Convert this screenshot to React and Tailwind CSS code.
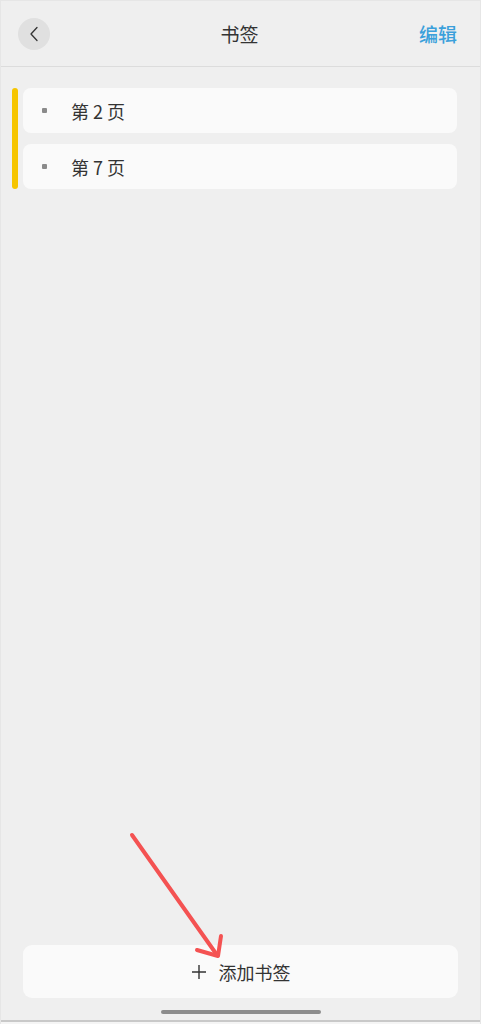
import React from "react";

export default function App() {
  const font = { fontFamily: '"Noto Sans CJK SC", "Noto Sans", sans-serif' };
  return (
    <div
      className="relative flex h-[1024px] w-[481px] flex-col bg-[#efefef] text-[#333333] border-l border-r border-t border-[#e6e6e6]"
      style={font}
    >
      {/* Header */}
      <div className="grid h-[66px] shrink-0 grid-cols-[1fr_auto_1fr] items-center border-b border-[#dcdcdc] pl-[17px] pr-[23px]">
        <div className="flex">
          <button className="flex h-[32px] w-[32px] items-center justify-center rounded-full bg-[#e0e0e0]">
            <svg width="10" height="16" viewBox="0 0 10 16" fill="none">
              <path d="M8 1.5L2 8l6 6.5" stroke="#333" strokeWidth="1.3" strokeLinecap="round" strokeLinejoin="round" />
            </svg>
          </button>
        </div>
        <div className="pl-[4px] text-[19px] font-normal leading-none text-[#333]">书签</div>
        <div className="flex justify-end">
          <div className="text-[19px] font-medium leading-none text-[#3ba0db]">编辑</div>
        </div>
      </div>

      {/* List */}
      <div className="flex gap-[5px] pl-[11px] pr-[23px] pt-[21px]">
        <div className="w-[6px] self-stretch rounded-full bg-[#f6c500]" />
        <div className="flex flex-1 flex-col gap-[11px]">
          {["第 2 页", "第 7 页"].map((t) => (
            <div key={t} className="flex h-[45px] items-center rounded-[8px] bg-[#fafafa] pl-[19px]">
              <div className="h-[5px] w-[5px] rounded-[1px] bg-[#8a8a8a]" />
              <div className="ml-[24px] text-[18px] leading-none text-[#333]">{t}</div>
            </div>
          ))}
        </div>
      </div>

      <div className="flex-1" />

      {/* Add button */}
      <div className="px-[22px]">
        <div className="flex h-[53px] items-center justify-center rounded-[9px] bg-[#fafafa]">
          <svg width="16" height="16" viewBox="0 0 16 16" fill="none" className="mr-[12px]">
            <path d="M8 1v14M1 8h14" stroke="#333" strokeWidth="1.4" />
          </svg>
          <span className="text-[18px] leading-none text-[#333]">添加书签</span>
        </div>
      </div>

      {/* Home indicator */}
      <div className="flex h-[22px] shrink-0 items-end justify-center pb-[6px]">
        <div className="h-[4px] w-[160px] rounded-full bg-[#8c8c8c]" />
      </div>
      <div className="h-[2px] shrink-0 bg-[#c9c9c9]" />
      <div className="h-[2px] shrink-0 bg-[#f5f5f5]" />

      {/* Red arrow overlay */}
      <svg className="pointer-events-none absolute left-0 top-0" width="481" height="1024" viewBox="0 0 481 1024">
        <g stroke="#f45252" strokeWidth="4" strokeLinecap="round" strokeLinejoin="round" fill="none">
          <path d="M131 834 L216 954" />
          <path d="M196 949 L217 955 L220 935" />
        </g>
      </svg>
    </div>
  );
}
